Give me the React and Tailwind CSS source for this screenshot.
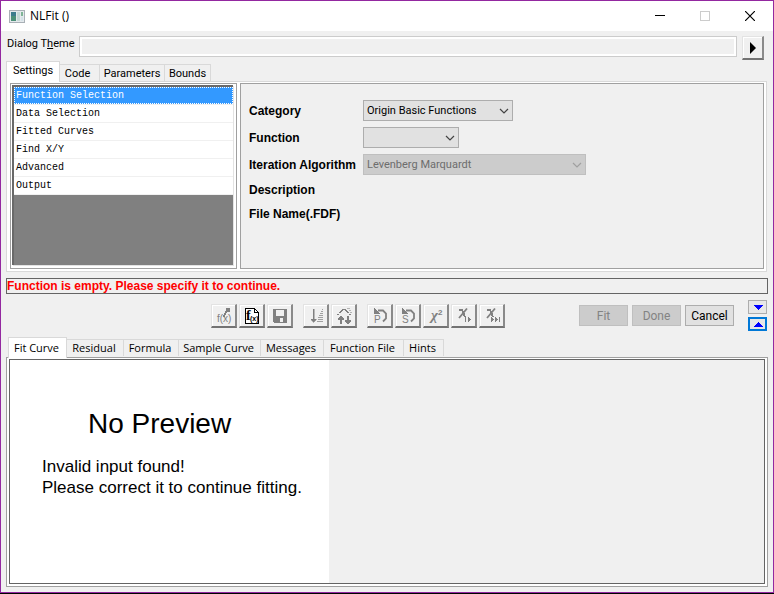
import React, { useState } from "react";

const steps = ["Function Selection", "Data Selection", "Fitted Curves", "Find X/Y", "Advanced", "Output"];

function Chevron({ className }) {
  return (
    <svg className={`pointer-events-none absolute right-1 top-1/2 -translate-y-1/2 ${className}`} width="10" height="6" viewBox="0 0 10 6" fill="none" stroke="currentColor" strokeWidth="1.2">
      <path d="M1 1l4 4 4-4" />
    </svg>
  );
}

const boldLabel = "whitespace-nowrap font-['Liberation_Sans',Arial,sans-serif] text-[12px] font-bold";

function SelectRow({ id, label, width, options, disabled }) {
  return (
    <div className="flex h-[27px] items-center">
      <label htmlFor={id} className={`w-[114px] ${boldLabel}`}>{label}</label>
      <div className={`relative min-w-0 ${width}`}>
        <select
          id={id}
          disabled={disabled}
          className="block h-[21px] w-full appearance-none border border-[#adadad] bg-[#e1e1e1] pl-[3px] pr-4 pt-px text-black disabled:border-[#bfbfbf] disabled:bg-[#cccccc] disabled:text-[#6d6d6d] disabled:opacity-100"
        >
          {options.map((o) => (
            <option key={o}>{o}</option>
          ))}
        </select>
        <Chevron className={disabled ? "text-[#a0a0a0]" : "text-[#444]"} />
      </div>
    </div>
  );
}

function ToolButton({ label, children, disabled = true }) {
  return (
    <button
      type="button"
      aria-label={label}
      disabled={disabled}
      className="flex h-6 w-[26px] items-center justify-center border-b-2 border-l border-r-2 border-t border-b-[#737373] border-l-[#e3e3e3] border-r-[#8a8a8a] border-t-[#e3e3e3] bg-[#f0f0f0] text-[#808080] shadow-[inset_1px_1px_0_#fff]"
    >
      {children}
    </button>
  );
}

function Icon({ children }) {
  return (
    <svg width="20" height="20" viewBox="0 0 20 20" fill="none" stroke="currentColor" shapeRendering="crispEdges">
      {children}
    </svg>
  );
}

const textIcon = "font-['Liberation_Sans',sans-serif]";
const serifIcon = "font-['Liberation_Serif',serif]";

function NewFunctionIcon() {
  return (
    <Icon>
      <path d="M12 2h4v4h-4z" fill="currentColor" stroke="none" />
      <path d="M11 5h2v2h-1v2h-1v2h-2V9h1V7h1z" fill="currentColor" stroke="none" />
      <text x="3" y="16" fontSize="10" fill="currentColor" stroke="none" className={textIcon}>f(x)</text>
    </Icon>
  );
}

function EditFunctionIcon() {
  return (
    <svg width="20" height="20" viewBox="0 0 20 20" fill="none" stroke="#000" shapeRendering="crispEdges">
      <path d="M3.500 2.500h9l4 4v11h-13z" fill="#fff" />
      <path d="M12.500 2.500v4h4" />
      <text x="4" y="14" fontSize="14" fontWeight="bold" fill="#000" stroke="none" className={serifIcon}>f</text>
      <text x="8" y="15" fontSize="7" fontWeight="bold" fill="#000" stroke="none" className={textIcon}>(x)</text>
    </svg>
  );
}

function SaveIcon() {
  return (
    <Icon>
      <path d="M3 3h14v14H4l-1-1z" fill="currentColor" stroke="none" />
      <path d="M6 4h8v6H6zM10 12h3v4h-3z" fill="#f0f0f0" stroke="none" />
    </Icon>
  );
}

function SortIcon() {
  return (
    <Icon>
      <path d="M7 3h1v10h2v1H9v1H8v1H7v-1H6v-1H5v-1h2z" fill="currentColor" strokeWidth="0.5" />
      <path d="M16 3.500h1M15 5.500h2M14 7.500h3M13 9.500h4M12 11.500h5M12 13.500h5M11 15.500h6" stroke="#a0a0a0" />
    </Icon>
  );
}

function SwapIcon() {
  return (
    <Icon>
      <path d="M3 8.500h2M5 6.500h2M6 5.500h2M7 4.500h2M8 3.500h4M11 4.500h2M12 5.500h2M13 6.500h2M15 8.500h2" />
      <path d="M13 2.500h3M15 4.500h2M16 6.500h2" stroke="#b5b5b5" />
      <path d="M6 10h1v1h1v1h1v1H7v4H6v-4H4v-1h1v-1h1zM13 10h1v4h2v1h-1v1h-1v1h-1v-1h-1v-1h-1v-1h2z" fill="currentColor" />
    </Icon>
  );
}

function UndoIcon({ letter }) {
  return (
    <Icon>
      <path d="M8 4.500h5l3 3v5l-3 3" strokeWidth="1.800" shapeRendering="auto" />
      <path d="M4 2h1v1h1v1h1v1h1v1h1v1h1v1H4z" fill="currentColor" stroke="none" />
      <text x="4" y="17" fontSize="10" fill="currentColor" stroke="none" className={textIcon}>{letter}</text>
    </Icon>
  );
}

function ChiIcon() {
  return (
    <Icon>
      <text x="5" y="14" fontSize="15" fontStyle="italic" fontWeight="bold" fill="currentColor" stroke="none" className={serifIcon}>χ</text>
      <text x="12" y="9" fontSize="8" fontWeight="bold" fill="currentColor" stroke="none" className={textIcon}>2</text>
    </Icon>
  );
}

function IterateIcon({ toEnd }) {
  return (
    <Icon>
      <path d="M5 3h4v2h1v2h1v3h1v1h-2v-1H9V7H8V5H5z" fill="currentColor" stroke="none" />
      <path d="M13 2.500L5 12" strokeWidth="1.800" shapeRendering="auto" />
      {toEnd ? (
        <path d="M9 11h1v1h1v1h1v1h-1v1h-1v1H9zM13 11h1v1h1v1h1v1h-1v1h-1v1h-1zM17 11h1v5h-1z" fill="currentColor" stroke="none" />
      ) : (
        <path d="M11 11h1v5h-1zM14 11h1v1h1v1h1v1h-1v1h-1v1h-1z" fill="currentColor" stroke="none" />
      )}
    </Icon>
  );
}

function SettingsTab({ label, width, active, onClick }) {
  return (
    <button
      type="button"
      role="tab"
      aria-selected={active}
      onClick={onClick}
      className={`${width} whitespace-nowrap border-r border-t border-[#d9d9d9] ${active ? "relative h-[21px] border-l bg-white pb-0.5" : "h-[18px]"}`}
    >
      {label}
    </button>
  );
}

function PreviewTab({ label, width, active, onClick }) {
  return (
    <button
      type="button"
      role="tab"
      aria-selected={active}
      onClick={onClick}
      className={`${width} whitespace-nowrap border-r border-t border-[#d9d9d9] pr-0.5 ${active ? "relative h-[21px] border-l bg-white" : "mb-0.5 h-[17px]"}`}
    >
      {label}
    </button>
  );
}

const settingsTabs = [
  ["Settings", "w-[54px]"],
  ["Code", "w-10 pr-1"],
  ["Parameters", "w-[65px]"],
  ["Bounds", "w-[46px]"],
];

const previewTabs = [
  ["Fit Curve", "w-[59px]"],
  ["Residual", "w-[57px]"],
  ["Formula", "w-[55px]"],
  ["Sample Curve", "w-[82px]"],
  ["Messages", "w-[63px]"],
  ["Function File", "w-[80px]"],
  ["Hints", "w-10"],
];

export default function App() {
  const [tab, setTab] = useState("Settings");
  const [preview, setPreview] = useState("Fit Curve");
  const [step, setStep] = useState("Function Selection");

  return (
    <div className="flex min-h-screen flex-col border-b border-black font-[Roboto,'Liberation_Sans',sans-serif] text-[11px] leading-4 text-black">
      <div className="flex flex-1 flex-col border border-[#9328a0] bg-[#f0f0f0]">
        <header className="flex h-[30px] shrink-0 items-center bg-white pl-2">
          <svg width="16" height="13" viewBox="0 0 16 13" shapeRendering="crispEdges">
            <path d="M0 0h16v13H0z" fill="#a9b0b6" />
            <path d="M1 1h14v11H1z" fill="#e4e9ec" />
            <path d="M2 2h5v9H2z" fill="#3c7c8c" />
            <path d="M2 6h5v5H2z" fill="#4b9078" />
            <path d="M8 2h3v9H8z" fill="#c5d8d5" />
            <path d="M12 2h2v4h-2z" fill="#7fb496" />
            <path d="M12 7h2v4h-2z" fill="#d5e2e8" />
          </svg>
          <h1 className="ml-[5px] flex-1 font-['Open_Sans',sans-serif] text-[12px]">NLFit ()</h1>
          <div className="flex h-full">
            <button type="button" aria-label="Minimize" className="flex w-[45px] items-center justify-center">
              <svg width="10" height="10" viewBox="0 0 10 10" stroke="#000" shapeRendering="crispEdges"><path d="M0 4.500h10" /></svg>
            </button>
            <button type="button" aria-label="Maximize" disabled className="flex w-[45px] items-center justify-center">
              <svg width="10" height="10" viewBox="0 0 10 10" fill="none" stroke="#ccc" shapeRendering="crispEdges"><path d="M.5.5h9v9h-9z" /></svg>
            </button>
            <button type="button" aria-label="Close" className="flex w-[46px] items-center justify-center">
              <svg width="10" height="10" viewBox="0 0 10 10" stroke="#000" strokeWidth="1.200"><path d="M0 0l10 10M10 0L0 10" /></svg>
            </button>
          </div>
        </header>

        <div className="flex h-[29px] items-start pl-1.5 pr-[9px] pt-[5px]">
          <label htmlFor="theme" className="w-[72px] whitespace-nowrap">Dialog T<u>h</u>eme</label>
          <input id="theme" readOnly className="h-[21px] min-w-0 flex-1 border border-[#ccc] bg-[#f0f0f0] shadow-[inset_0_0_0_2px_#fff] outline-none" />
          <button type="button" aria-label="Theme menu" className="ml-[5px] flex h-6 w-[22px] items-center justify-center border-b-2 border-l border-r-2 border-t border-b-[#737373] border-l-[#e3e3e3] border-r-[#8a8a8a] border-t-[#e3e3e3] shadow-[inset_1px_1px_0_#fff]">
            <svg width="7" height="12" viewBox="0 0 7 12"><path d="M1 0l6 6-6 6z" /></svg>
          </button>
        </div>

        <div role="tablist" className="-mb-px mt-px flex h-[21px] items-end pl-[5px]">
          {settingsTabs.map(([label, width]) => (
            <SettingsTab key={label} label={label} width={width} active={tab === label} onClick={() => setTab(label)} />
          ))}
        </div>
        <div className="ml-[5px] mr-1.5 flex h-[191px] shrink-0 gap-[3px] border border-[#d9d9d9] bg-white pb-0.5 pl-[3px] pr-0.5 pt-px">
          <section className="w-[227px] shrink-0 border border-[#a0a0a0] pb-[3px] pl-px pr-[3px] pt-px">
            <ul className="h-full border-l-2 border-t-2 border-[#696969] bg-[#808080] font-['Liberation_Mono',monospace] text-[10px] shadow-[1px_1px_0_#e3e3e3]">
              {steps.map((s) => (
                <li key={s} className="border-b border-[#f0f0f0] bg-white">
                  <button
                    type="button"
                    onClick={() => setStep(s)}
                    className={`block h-[17px] w-full text-left ${step === s ? "border border-dotted border-white bg-[#3399ff] pl-px text-white" : "pl-0.5"}`}
                  >
                    {s}
                  </button>
                </li>
              ))}
            </ul>
          </section>
          <section className="min-w-0 flex-1 border border-[#a0a0a0] bg-[#f0f0f0] pl-2 pt-[13px]">
            <SelectRow id="category" label="Category" width="w-[150px]" options={["Origin Basic Functions"]} />
            <SelectRow id="function" label="Function" width="w-24" options={[""]} />
            <SelectRow id="algorithm" label="Iteration Algorithm" width="w-[223px]" options={["Levenberg Marquardt"]} disabled />
            <p className={`flex h-6 items-center ${boldLabel}`}>Description</p>
            <p className={`flex h-6 items-center ${boldLabel}`}>File Name(.FDF)</p>
          </section>
        </div>

        <p role="alert" className={`mx-[5px] mt-1.5 h-4 shrink-0 border border-[#646464] leading-[14px] text-[#ff0000] ${boldLabel}`}>
          Function is empty. Please specify it to continue.
        </p>

        <div className="mt-1.5 flex h-8 shrink-0 items-center pr-1.5">
          <div className="flex flex-1 items-center justify-end gap-2.5">
            <div className="flex gap-0.5">
              <ToolButton label="New function"><NewFunctionIcon /></ToolButton>
              <ToolButton label="Edit function" disabled={false}><EditFunctionIcon /></ToolButton>
              <ToolButton label="Save"><SaveIcon /></ToolButton>
            </div>
            <div className="flex gap-0.5">
              <ToolButton label="Initialize order"><SortIcon /></ToolButton>
              <ToolButton label="Simplex"><SwapIcon /></ToolButton>
            </div>
            <div className="flex gap-0.5">
              <ToolButton label="Undo parameters"><UndoIcon letter="P" /></ToolButton>
              <ToolButton label="Undo settings"><UndoIcon letter="S" /></ToolButton>
              <ToolButton label="Chi-square"><ChiIcon /></ToolButton>
              <ToolButton label="One iteration"><IterateIcon /></ToolButton>
              <ToolButton label="Fit until converged"><IterateIcon toEnd /></ToolButton>
            </div>
          </div>
          <div className="ml-[74px] flex gap-1 pb-px text-[12px]">
            <button type="button" disabled className="h-[21px] w-[49px] border border-[#bfbfbf] bg-[#ccc] text-[#838383]">Fit</button>
            <button type="button" disabled className="h-[21px] w-[49px] border border-[#bfbfbf] bg-[#ccc] text-[#838383]">Done</button>
            <button type="button" className="h-[21px] w-[49px] border border-[#adadad] bg-[#e1e1e1]">Cancel</button>
          </div>
          <div className="ml-3.5 flex flex-col gap-[3px] self-start">
            <button type="button" aria-label="Collapse" className="flex h-3.5 w-[19px] items-center justify-center border border-[#adadad] bg-[#e8e8e8]">
              <svg width="10" height="5" viewBox="0 0 10 5" fill="#00f" shapeRendering="crispEdges"><path d="M0 0h10L5 5z" /></svg>
            </button>
            <button type="button" aria-label="Expand" className="flex h-3.5 w-[19px] items-center justify-center border-2 border-[#0078d7] bg-[#e8e8e8]">
              <svg width="10" height="5" viewBox="0 0 10 5" fill="#00f" shapeRendering="crispEdges"><path d="M0 5h10L5 0z" /></svg>
            </button>
          </div>
        </div>

        <div role="tablist" className="-mb-px mt-[5px] flex h-[21px] shrink-0 items-end pl-[7px] font-['Open_Sans',sans-serif]">
          {previewTabs.map(([label, width]) => (
            <PreviewTab key={label} label={label} width={width} active={preview === label} onClick={() => setPreview(label)} />
          ))}
        </div>
        <main className="mx-[5px] mb-[5px] flex flex-1 border border-[#a0a0a0] bg-white pb-0.5 pl-0.5 pr-0.5 pt-px">
          <div className="flex flex-1 border border-[#646464] bg-[#f0f0f0]">
            <div className="w-[319px] bg-white pt-12 font-['Liberation_Sans',Arial,sans-serif]">
              <h2 className="pl-[78px] text-[28px] leading-8">No Preview</h2>
              <p className="mt-4 whitespace-nowrap pl-8 text-[17px] leading-[21px]">
                Invalid input found!
                <br />
                Please correct it to continue fitting.
              </p>
            </div>
          </div>
        </main>
      </div>
    </div>
  );
}
